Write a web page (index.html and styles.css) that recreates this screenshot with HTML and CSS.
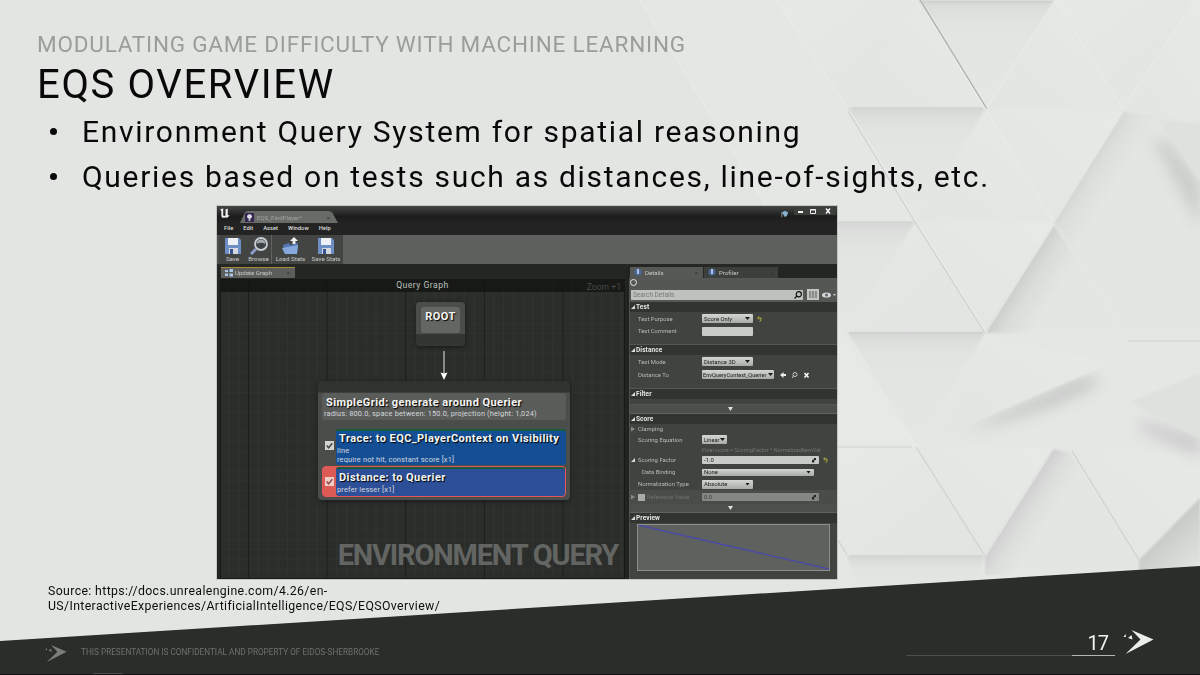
FILE: index.html
```
<!DOCTYPE html>
<html lang="en">
<head>
    <meta charset="UTF-8">
    <meta name="viewport" content="width=device-width, initial-scale=1.0">
    <title>EQS Overview</title>

    <link rel="stylesheet" href="styles.css">
</head>

<body>
    <div class="slide">
        <svg class="backdrop" viewBox="0 0 1200 675">
            <defs>
                <linearGradient id="down" x1="0" y1="0" x2="0" y2="1">
                    <stop offset="0" stop-color="#d4d6d4"/>
                    <stop offset=".08" stop-color="#dddfdd"/>
                    <stop offset=".22" stop-color="#e2e4e2"/>
                    <stop offset="1" stop-color="#e5e7e5"/>
                </linearGradient>
                <linearGradient id="soft" x1="0" y1="0" x2="1" y2="1">
                    <stop offset="0" stop-color="#e7e9e7"/>
                    <stop offset="1" stop-color="#e2e4e2"/>
                </linearGradient>
                <linearGradient id="light" x1="0" y1="1" x2="1" y2="0">
                    <stop offset="0" stop-color="#e3e5e3"/>
                    <stop offset="1" stop-color="#e7e9e7"/>
                </linearGradient>
                <linearGradient id="side" gradientUnits="userSpaceOnUse" x1="1086" y1="165" x2="1118" y2="185">
                    <stop offset="0" stop-color="#d1d3d1"/>
                    <stop offset=".35" stop-color="#dddfdd"/>
                    <stop offset="1" stop-color="#e4e6e4"/>
                </linearGradient>
                <linearGradient id="side2" gradientUnits="userSpaceOnUse" x1="1019" y1="277" x2="1054" y2="299">
                    <stop offset="0" stop-color="#cbcdcb"/>
                    <stop offset=".4" stop-color="#dbdddb"/>
                    <stop offset="1" stop-color="#e4e6e4"/>
                </linearGradient>
                <linearGradient id="side3" gradientUnits="userSpaceOnUse" x1="1019" y1="502" x2="1050" y2="522">
                    <stop offset="0" stop-color="#cecfce"/>
                    <stop offset=".45" stop-color="#dddfdd"/>
                    <stop offset="1" stop-color="#e4e6e4"/>
                </linearGradient>
                <linearGradient id="corner" gradientUnits="userSpaceOnUse" x1="1168" y1="526" x2="1200" y2="560">
                    <stop offset="0" stop-color="#c7c9c7"/>
                    <stop offset="1" stop-color="#e0e2e0"/>
                </linearGradient>
                <filter id="blur" x="-30%" y="-30%" width="160%" height="160%"><feGaussianBlur stdDeviation="7"/></filter>
                <filter id="blur1"><feGaussianBlur stdDeviation=".9"/></filter>
            </defs>
            <rect width="1200" height="675" fill="#e3e5e3"/>
            <rect x="838" width="362" height="600" fill="#e5e7e5"/>
            <g filter="url(#blur1)">
                <path fill="#e5e7e5" d="M640 0H776L848 109L915 222H776L707 109Z"/>
                <path fill="url(#soft)" d="M776 0H918L848 109Z"/>
                <path fill="url(#light)" d="M918 0L986 109H848Z"/>
                <path fill="url(#down)" d="M918 0H1055L986 109Z"/>
                <path fill="url(#light)" d="M1055 0L1123 109H986Z"/>
                <path fill="url(#soft)" d="M1055 0H1195L1123 109Z"/>
                <path fill="url(#light)" d="M1195 0H1200V122L1123 111Z"/>
                <path fill="url(#down)" d="M848 108H986L915 222Z"/>
                <path fill="url(#light)" d="M986 109L1054 222H915Z"/>
                <path fill="url(#light)" d="M986 109L1123 112L1054 222Z"/>
                <path fill="url(#side)" d="M1123 112L1200 120V330H1125L1054 222Z"/>
                <path fill="url(#down)" d="M776 222H915L847 333Z"/>
                <path fill="url(#soft)" d="M915 222L985 333H847Z"/>
                <path fill="url(#light)" d="M915 222H1054L985 333Z"/>
                <path fill="url(#side2)" d="M1054 225L1125 333H985Z"/>
                <path fill="url(#down)" d="M847 332H985L916 447Z"/>
                <path fill="#e7e9e7" d="M838 325L916 447H838Z"/>
                <path fill="url(#soft)" d="M838 447H916L985 556H847Z"/>
                <path fill="url(#light)" d="M916 447H1053L985 556Z"/>
                <path fill="url(#side3)" d="M1053 449L1070 453L1139 560V575H985V556Z"/>
                <path fill="url(#light)" d="M1072 451H1200V500L1139 560Z"/>
                <path fill="url(#corner)" d="M1139 560L1200 498V570H1139Z"/>
                <path fill="url(#down)" d="M847 556H985L960 620H870Z"/>
            </g>
            <!-- cast shadows under the raised tiles -->
            <g filter="url(#blur)">
                <path fill="#c3c5c3" opacity=".85" d="M965 430L1075 378Q1105 374 1096 386Q1040 418 965 430Z"/>
                <path fill="#c5c7c5" opacity=".8" d="M1140 420L1200 436V458Q1170 445 1140 430Z"/>
                <path fill="#c3c5c3" opacity=".8" d="M1152 138L1168 142L1200 182V228Z"/>
            </g>
            <g filter="url(#blur1)">
                <path fill="url(#light)" d="M985 336L940 437L1112 363L1058 352Z"/>
                <path fill="#dfe1df" d="M1158 120L1200 123V182Z"/>
                <path fill="#dfe1df" d="M1130 402L1200 373V439Z"/>
            </g>
            <path class="crease strong" d="M920 0L987 109"/>
            <path class="crease" d="M848 111L915 222L985 333M916 447L985 556M1072 451L1139 560M838 540L847 555"/>
            <path class="shine" d="M918 0L985 109M850 111L917 222L987 333M640 0L776 222M776 0L848 109M986 109L1054 222M847 333L916 447M1123 109L1195 0M986 109L1055 0M1055 0L1123 109M1054 222L1123 111M985 333L1054 224M985 556L1053 449"/>
            <path class="crease" d="M918 2H1052M852 108H982M838 222H912M849 333H983M838 447H912M850 556H982M1128 341H1200"/>
            <path fill="#2b2d2b" d="M0 641L1200 566V675H0Z"/>
            <path fill="#111211" d="M0 674H1200V675H0Z"/>
            <path fill="#4c4e4c" d="M93 673H122V674H93Z"/>
        </svg>

        <div class="heading">
            <p class="kicker">MODULATING GAME DIFFICULTY WITH MACHINE LEARNING</p>
            <h1>EQS OVERVIEW</h1>
        </div>

        <ul class="bullets">
            <li>Environment Query System for spatial reasoning</li>
            <li>Queries based on tests such as distances, line-of-sights, etc.</li>
        </ul>

        <div class="editor">
            <div class="titlebar">
                <svg class="logo" viewBox="0 0 12 12"><path d="M0 2Q2 .5 3.5 .5V8Q4.500 9.500 6 8V2.500L5.500 2L8.500 .5V8L10.500 8Q9 10.500 7 11L6.200 10Q4 11.500 2 10L1.500 9V3Z"/></svg>
                <div class="file-tab">
                    <svg viewBox="0 0 10 10"><rect width="10" height="10" fill="#352651"/><circle cx="5" cy="4" r="2.700" fill="#dedee8"/><rect x="4" y="6" width="2" height="3" fill="#bbb"/></svg>
                    <span>EQS_FindPlayer*</span>
                    <i>×</i>
                </div>
                <svg class="hat" viewBox="0 0 10 8"><path fill="#86afd0" d="M1 2L5 0L9 2L7.500 6L5 8L3 5Z"/><path stroke="#aaa" d="M1 2V8"/></svg>
                <svg class="winbtns" viewBox="0 0 42 8"><path fill="#3c3e3c" d="M0 0H42V8H0Z"/><path fill="#eee" d="M4 4H9V6H4Z"/><path fill="none" stroke="#eee" d="M16.500 2.500H21.500V6.500H16.500ZM16 3H22"/><path stroke="#fff" stroke-width="1.300" d="M32 1.500L36 6.500M36 1.500L32 6.500"/></svg>
            </div>
            <div class="menubar">
                <span>File</span><span>Edit</span><span>Asset</span><span>Window</span><span>Help</span>
            </div>
            <div class="toolbar">
                <div class="tools">
                    <div class="tool t-save">
                        <svg viewBox="0 0 18 18"><path fill="#6d8fc6" d="M1 1H15L17 3V17H1Z"/><path fill="#edf0f4" d="M4 1H14V8H4Z"/><path fill="#d5d9df" d="M5 11H14V17H5Z"/><path fill="#36528a" d="M6 12H9V17H6Z"/></svg>
                        <span>Save</span>
                    </div>
                    <div class="tool t-browse">
                        <svg viewBox="0 0 18 18"><path stroke="#8c9ccc" stroke-width="3" d="M1 17L6 12"/><circle cx="11" cy="7" r="6" fill="#3d4246" stroke="#c9cdd4" stroke-width="1.800"/><path fill="#a4aaae" d="M6.500 7Q7 2.500 11 2.500Q15 2.500 15.500 7Q11 4.500 6.500 7Z"/></svg>
                        <span>Browse</span>
                    </div>
                    <div class="tool t-load">
                        <svg viewBox="0 0 18 18"><path fill="#5377b5" d="M1 8L7 6L8 8L16 6L15 17H3Z"/><path fill="#86a9dc" d="M0 11L16 8L15 17H3Z"/><path fill="#eceef0" d="M12 0L16 4H13.500V7H10.500V4H8Z"/></svg>
                        <span>Load Stats</span>
                    </div>
                    <div class="tool t-stats">
                        <svg viewBox="0 0 18 18"><path fill="#6d8fc6" d="M1 1H15L17 3V17H1Z"/><path fill="#edf0f4" d="M4 1H14V8H4Z"/><path fill="#d5d9df" d="M5 11H14V17H5Z"/><path fill="#36528a" d="M6 12H9V17H6Z"/></svg>
                        <span>Save Stats</span>
                    </div>
                </div>
            </div>

            <div class="workspace">
                <div class="left">
                    <div class="tabs">
                        <div class="panel-tab graph-tab">
                            <svg viewBox="0 0 8 8"><path fill="#a8c5e5" d="M0 1H3V3H0ZM4.500 0H8V3H4.500ZM4.500 4.500H8V7.500H4.500ZM0 4.500H3V7H0Z"/></svg>
                            <span>Update Graph</span><i>×</i>
                        </div>
                    </div>
                    <div class="graph">
                        <div class="graph-title">Query Graph</div>
                        <span class="zoom">Zoom +1</span>
                        <div class="node root"><b>ROOT</b></div>
                        <svg class="arrow" viewBox="0 0 8 30"><path stroke="#e4e6e4" d="M4 1V26"/><path fill="#fff" d="M.5 22.500L4 23.500L7.500 22.500L4 30Z"/></svg>
                        <div class="node grid-node">
                            <div class="node-head">
                                <b>SimpleGrid: generate around Querier</b>
                                <span>radius: 800.0, space between: 150.0, projection (height: 1,024)</span>
                            </div>
                            <div class="test trace">
                                <div class="check"><svg viewBox="0 0 8 8"><path d="M1.500 4L3.200 6L6.500 2"/></svg></div>
                                <div class="test-body">
                                    <b>Trace: to EQC_PlayerContext on Visibility</b>
                                    <span>line</span>
                                    <span>require not hit, constant score [x1]</span>
                                </div>
                            </div>
                            <div class="test distance">
                                <div class="check"><svg viewBox="0 0 8 8"><path d="M1.500 4L3.200 6L6.500 2"/></svg></div>
                                <div class="test-body">
                                    <b>Distance: to Querier</b>
                                    <span>prefer lesser [x1]</span>
                                </div>
                            </div>
                        </div>
                        <div class="watermark">ENVIRONMENT QUERY</div>
                    </div>
                </div>

                <div class="right">
                    <div class="tabs">
                        <div class="panel-tab details-tab">
                            <svg viewBox="0 0 8 8"><circle cx="4" cy="4" r="3.500" fill="#48689c"/><path stroke="#dde" stroke-width="1.500" d="M4 1V6"/></svg>
                            <span>Details</span><i>×</i>
                        </div>
                        <div class="panel-tab profiler-tab">
                            <svg viewBox="0 0 8 8"><circle cx="4" cy="4" r="3.500" fill="#48689c"/><path stroke="#dde" stroke-width="1.500" d="M4 1V6"/></svg>
                            <span>Profiler</span><i>×</i>
                        </div>
                    </div>
                    <div class="details">
                        <div class="details-head">
                            <div class="ring"></div>
                            <div class="search-row">
                                <div class="search">
                                    <span>Search Details</span>
                                    <svg viewBox="0 0 8 8"><circle cx="4.800" cy="3.200" r="2.600"/><path d="M3 5L.5 7.500"/></svg>
                                </div>
                                <div class="matrix"></div>
                                <svg class="eye" viewBox="0 0 14 6"><ellipse cx="4.500" cy="3" rx="4.500" ry="2.600" fill="#d5d7d5"/><circle cx="4.500" cy="3" r="1.500" fill="#667"/><path fill="#ccc" d="M11 2H14L12.500 4Z"/></svg>
                            </div>
                        </div>

                        <div class="section">Test</div>
                        <div class="row h13"><label>Test Purpose</label><div class="select w52">Score Only</div><svg class="undo" viewBox="0 0 5 6"><path d="M2 .5L.7 2L2 3.500M1 2H4V4.500L2.500 5.500"/></svg></div>
                        <div class="row h12"><label>Test Comment</label><div class="input w52"></div></div>
                        <div class="gap g8"></div>

                        <div class="section">Distance</div>
                        <div class="row h13"><label>Test Mode</label><div class="select w52">Distance 3D</div></div>
                        <div class="row h13"><label>Distance To</label><div class="select w73">EnvQueryContext_Querier</div>
                            <svg class="row-icons" viewBox="0 0 30 8"><path fill="#eee" d="M0 4L3.500 1V3H6V5H3.500V7Z"/><circle cx="15" cy="3.500" r="2" fill="none" stroke="#ccc"/><path stroke="#ccc" d="M13.500 5L12 7"/><path stroke="#fff" stroke-width="1.500" d="M24.500 2L28.500 6.500M28.500 2L24.500 6.500"/></svg>
                        </div>
                        <div class="gap g8"></div>

                        <div class="section">Filter</div>
                        <div class="gap g6"></div>
                        <div class="expander"></div>

                        <div class="section">Score</div>
                        <div class="row h10 closed"><label>Clamping</label></div>
                        <div class="row h11"><label>Scoring Equation</label><div class="select w25">Linear</div></div>
                        <div class="row h9"><label></label><span class="hint">Final score = ScoringFactor * NormalizedItemVal</span></div>
                        <div class="row h12 open"><label>Scoring Factor</label><div class="input w117">-1.0<u></u></div><svg class="undo" viewBox="0 0 5 6"><path d="M2 .5L.7 2L2 3.500M1 2H4V4.500L2.500 5.500"/></svg></div>
                        <div class="row h12 indent"><label>Data Binding</label><div class="select w112">None</div></div>
                        <div class="row h12"><label>Normalization Type</label><div class="select w52">Absolute</div></div>
                        <div class="row h14 closed disabled"><label><s></s>Reference Value</label><div class="input w117">0.0<u></u></div></div>
                        <div class="expander"></div>

                        <div class="section">Preview</div>
                        <div class="preview">
                            <svg viewBox="0 0 193 46" preserveAspectRatio="none"><path d="M0 0L193 45"/></svg>
                        </div>
                    </div>
                </div>
            </div>
        </div>

        <p class="source">Source: https://docs.unrealengine.com/4.26/en-<br>US/InteractiveExperiences/ArtificialIntelligence/EQS/EQSOverview/</p>

        <div class="footer">
            <svg class="mark small" viewBox="0 0 30 24"><path d="M8 0L30 9.500L2 24L17 9.500ZM4.500 8L8 5L9 9.500ZM0 7L2 4L2.500 7Z"/></svg>
            <span class="legal">THIS PRESENTATION IS CONFIDENTIAL AND PROPERTY OF EIDOS-SHERBROOKE</span>
            <div class="rule"></div>
            <div class="page">17</div>
            <svg class="mark" viewBox="0 0 30 24"><path d="M8 0L30 9.500L2 24L17 9.500ZM4.500 8L8 5L9 9.500ZM0 7L2 4L2.500 7Z"/></svg>
        </div>
    </div>
</body>
</html>
```
FILE: styles.css
```
*{
    margin: 0;
    padding: 0;
    box-sizing: border-box;
}
body{
    width: 1200px;
    height: 675px;
    overflow: hidden;
    font-family: Roboto, "Liberation Sans", sans-serif;
}
svg{
    display: block;
    flex: none;
}
i, u, s{
    font-style: normal;
    text-decoration: none;
}
.slide{
    position: relative;
    width: 1200px;
    height: 675px;
    display: flex;
    flex-direction: column;
    isolation: isolate;
    white-space: nowrap;
}
.backdrop{
    position: absolute;
    inset: 0;
    width: 1200px;
    height: 675px;
    z-index: -1;
}
.crease{
    fill: none;
    stroke: #c6c8c6;
    stroke-width: 1.2;
    opacity: 0.7;
}
.strong{
    stroke: #a9aba9;
    opacity: 1;
}
.shine{
    fill: none;
    stroke: #eef0ee;
    stroke-width: 1.5;
    opacity: 0.4;
}

/* slide text */
.heading{
    height: 109px;
    padding: 31px 0 0 37px;
}
.kicker{
    font-size: 22.5px;
    line-height: 26px;
    font-weight: 400;
    letter-spacing: 0.79px;
    color: #9a9d9a;
}
.heading h1{
    padding-top: 3px;
    font-size: 40px;
    line-height: 50px;
    font-weight: 400;
    letter-spacing: 1.65px;
    color: #080908;
}
.bullets{
    height: 97px;
    list-style: none;
    font-size: 30px;
    line-height: 45px;
    letter-spacing: 1.7px;
    color: #080908;
}
.bullets li{
    display: flex;
    align-items: center;
    padding-left: 50px;
}
.bullets li::before{
    content: "";
    width: 7px;
    height: 7px;
    margin-right: 25px;
    border-radius: 50%;
    background-color: #080908;
}

/* editor window */
.editor{
    width: 620px;
    height: 373px;
    margin-left: 217px;
    outline: 1px solid #c4c6c4;
    background-color: #232523;
    color: #c9cbc9;
    font-size: 6.5px;
    display: flex;
    flex-direction: column;
    overflow: hidden;
}
.titlebar{
    height: 17px;
    display: flex;
    background: linear-gradient(#454745, #1b1c1b 60%, #222322);
}
.logo{
    width: 11px;
    height: 11px;
    margin: 2px 9px 0 3px;
    fill: #eeeeee;
}
.file-tab{
    width: 98px;
    height: 12px;
    margin-top: 5px;
    padding: 0 8px 0 5px;
    display: flex;
    align-items: center;
    background-color: #696b69;
    clip-path: polygon(5% 10%, 8% 0, 91% 0, 94% 10%, 100% 100%, 0 100%);
    color: #a2a4a2;
    font-size: 6.1px;
}
.file-tab svg{
    width: 9px;
    height: 9px;
    margin-right: 3px;
}
.file-tab i, .panel-tab i{
    margin-left: auto;
    color: #333533;
}
.hat{
    width: 8px;
    height: 8px;
    margin: 4px 0 0 auto;
}
.winbtns{
    width: 42px;
    height: 8px;
    margin: 1px 1px 0 5px;
}
.menubar{
    height: 12px;
    display: flex;
    gap: 10px;
    padding-left: 7px;
    line-height: 11px;
    font-size: 5.8px;
    font-weight: 500;
    color: #dcdedc;
    background-color: #222322;
}
.toolbar{
    height: 29px;
    background-color: #5e605e;
}
.tools{
    width: 126px;
    height: 29px;
    display: flex;
    background-color: #434543;
    border-left: 2px solid #4e504e;
}
.tool{
    display: flex;
    flex-direction: column;
    align-items: center;
    padding-top: 2px;
    font-size: 6.2px;
    line-height: 8px;
}
.tool svg{
    width: 18px;
    height: 18px;
}
.t-save{
    width: 27px;
}
.t-browse{
    width: 26px;
    border-right: 1px solid #616361;
}
.t-load{
    width: 37px;
}
.t-stats{
    width: 34px;
}
.workspace{
    flex: 1;
    display: flex;
    border-top: 3px solid #252725;
}
.left{
    width: 410px;
    display: flex;
    flex-direction: column;
}
.tabs{
    height: 11px;
    display: flex;
    gap: 1px;
    background-color: #242624;
}
.panel-tab{
    display: flex;
    align-items: center;
    gap: 3px;
    padding: 0 5px 1px 4px;
    height: 11px;
    font-size: 6.1px;
}
.panel-tab svg{
    width: 8px;
    height: 8px;
}
.graph-tab{
    width: 74px;
    margin-left: 4px;
    gap: 2px;
    background-color: #5c5e5c;
    border-top: 1px solid #a58b3c;
}
.graph{
    position: relative;
    flex: 1;
    margin: 1px 2px 0 3px;
    border: 1px solid #171817;
    background-color: #2b2d2b;
    background-image:
        linear-gradient(90deg, #1b1d1b 1px, transparent 1px),
        linear-gradient(90deg, #313331 1px, transparent 1px),
        linear-gradient(#2f312f 1px, transparent 1px);
    background-size: 78.6px 100%, 9.825px 100%, 100% 9.825px;
    background-position: 27px 0, 27px 0, 0 4px;
}
.graph-title{
    height: 12px;
    background-color: rgba(18,19,18,0.75);
    text-align: center;
    font-size: 8.6px;
    line-height: 11px;
    letter-spacing: 0.5px;
    color: #bfc1bf;
}
.zoom{
    position: absolute;
    right: 3px;
    top: 2px;
    font-size: 8.6px;
    color: #474947;
}
.node{
    position: absolute;
    border-radius: 4px;
    background-color: #454745;
    box-shadow: 0 1px 4px rgba(0,0,0,0.5);
}
.node b{
    color: #f4f6f4;
    text-shadow: 1px 1px 1px #000000;
    font-weight: 700;
    letter-spacing: 0.43px;
}
.root{
    left: 195px;
    top: 22px;
    width: 49px;
    height: 44px;
    padding: 5px;
    background: linear-gradient(#4b4d4b 72%, #343634 73%);
}
.root b{
    display: block;
    height: 26px;
    border-radius: 3px;
    background-color: #646664;
    font-size: 11px;
    line-height: 19px;
    text-align: center;
}
.arrow{
    position: absolute;
    left: 219px;
    top: 70px;
    width: 8px;
    height: 30px;
}
.grid-node{
    left: 97px;
    top: 101px;
    width: 252px;
    height: 119px;
    padding: 12px 4px 0 4px;
    background: linear-gradient(#303230 11px, #4b4d4b 12px);
}
.node-head{
    height: 27px;
    padding: 3px 0 0 2px;
    border-radius: 3px;
    background-color: #5a5c5a;
}
.node-head b{
    display: block;
    padding-left: 2px;
    font-size: 11px;
    line-height: 13px;
}
.grid-node span{
    display: block;
    font-size: 7.4px;
    line-height: 9px;
    letter-spacing: 0.16px;
    color: #d5d8dc;
}
.test{
    display: flex;
    align-items: center;
    border-radius: 4px;
}
.trace{
    margin-top: 9px;
    height: 36px;
}
.distance{
    margin-top: 1px;
    height: 31px;
    border: 1px solid #e4585c;
    background-color: #dc5b55;
}
.check{
    width: 14px;
    display: flex;
    justify-content: center;
    flex: none;
}
.trace .check{
    padding-bottom: 4px;
}
.distance .check{
    width: 13px;
    padding-bottom: 1px;
}
.check svg{
    width: 9px;
    height: 9px;
    background-color: #d3d5d3;
    fill: none;
    stroke: #444644;
    stroke-width: 1.3;
}
.distance .check svg{
    background-color: #f1cdca;
    stroke: #8a4a48;
}
.test-body{
    flex: 1;
    height: 100%;
    border-top: 2px solid #145c3c;
    border-radius: 3px;
    background-color: #144f96;
    padding-left: 1px;
}
.test-body b{
    display: block;
    padding-left: 2px;
    font-size: 11px;
    line-height: 15px;
}
.distance .test-body{
    background-color: #2d4f98;
    padding-top: 1px;
}
.watermark{
    position: absolute;
    right: 6px;
    bottom: 5px;
    font-size: 29px;
    line-height: 36px;
    font-weight: 700;
    letter-spacing: -1.2px;
    color: #636563;
}

/* details panel */
.right{
    width: 210px;
    padding-left: 2px;
    display: flex;
    flex-direction: column;
    background-color: #202220;
}
.right .tabs{
    padding-left: 1px;
}
.details-tab{
    width: 73px;
    background-color: #565856;
}
.profiler-tab{
    width: 74px;
    background-color: #3d3f3d;
}
.details{
    flex: 1;
    display: flex;
    flex-direction: column;
    background-color: #414341;
    border-left: 1px solid #525452;
}
.details-head{
    height: 24px;
    background-color: #555755;
    padding: 1px 0 0 0;
}
.ring{
    width: 7px;
    height: 7px;
    border: 1.5px solid #e5e7e5;
    border-radius: 50%;
}
.search-row{
    display: flex;
    align-items: center;
    margin-top: 3px;
    padding-left: 1px;
}
.search{
    width: 172px;
    height: 10px;
    display: flex;
    align-items: center;
    justify-content: space-between;
    padding: 0 1px 0 2px;
    background-color: #bfc1bf;
    color: #777977;
}
.search svg{
    width: 8px;
    height: 8px;
    fill: none;
    stroke: #111211;
    stroke-width: 1.2;
}
.matrix{
    width: 12px;
    height: 11px;
    margin: 0 3px 0 4px;
    border: 2px solid #c4c6c4;
    background: repeating-linear-gradient(90deg, #8c8e8c 0 2px, #b4b6b4 2px 3px);
}
.eye{
    width: 14px;
    height: 6px;
}
.section{
    height: 10px;
    flex: none;
    display: flex;
    align-items: center;
    gap: 1px;
    padding-left: 1px;
    background-color: #323432;
    color: #e5e7e5;
    font-size: 6.5px;
    font-weight: 700;
    letter-spacing: 0.1px;
}
.section::before, .open::before{
    content: "";
    width: 4px;
    height: 4px;
    background-color: #dcdedc;
    clip-path: polygon(100% 0, 100% 100%, 0 100%);
}
.row{
    flex: none;
    display: flex;
    align-items: center;
    color: #b9bbb9;
    font-size: 5.9px;
}
.row label{
    width: 72px;
    padding-left: 8px;
    display: flex;
    align-items: center;
    flex: none;
}
.open::before{
    margin: 0 -5px 0 1px;
}
.closed::before{
    content: "";
    width: 4px;
    height: 5px;
    margin: 0 -5px 0 1px;
    background-color: #888a88;
    clip-path: polygon(0 0, 100% 50%, 0 100%);
}
.indent label{
    padding-left: 12px;
}
.h9{ height: 9px; }
.h10{ height: 10px; }
.h11{ height: 11px; }
.h12{ height: 12px; }
.h13{ height: 13px; }
.h14{ height: 14px; }
.gap{
    flex: none;
    border-bottom: 1px solid #555755;
}
.g6{ height: 6px; }
.g8{ height: 8px; }
.select, .input{
    height: 9px;
    display: flex;
    align-items: center;
    justify-content: space-between;
    padding: 0 3px 0 2px;
    background-color: #c9cbc9;
    color: #191a19;
    border-radius: 1px;
}
.select{
    background: linear-gradient(#d4d6d4, #a9aba9);
}
.select::after{
    content: "";
    width: 5px;
    height: 3px;
    flex: none;
    background-color: #191a19;
    clip-path: polygon(0 0, 100% 0, 50% 100%);
}
.w25{ width: 25px; padding-right: 2px; font-size: 5.6px; }
.w52{ width: 51px; }
.w73{ width: 72px; padding: 0 1px; font-size: 5.6px; }
.w112{ width: 112px; height: 7px; }
.w117{ width: 117px; height: 8px; }
.input u{
    width: 4px;
    height: 5px;
    background: #222322;
    clip-path: polygon(40% 0, 100% 0, 100% 50%, 50% 60%, 60% 100%, 0 100%, 0 50%, 50% 40%);
}
.undo{
    width: 5px;
    height: 6px;
    margin-left: 4px;
    fill: none;
    stroke: #b5b13c;
}
.row-icons{
    width: 30px;
    height: 8px;
    margin-left: 6px;
}
.hint{
    font-size: 5.5px;
    color: #747674;
}
.disabled{
    color: #707270;
    background-color: #4a4c4a;
}
.disabled s{
    width: 7px;
    height: 7px;
    margin: 0 2px 0 0;
    background-color: #aaacaa;
}
.disabled .input{
    background-color: #858785;
    color: #424442;
}
.expander{
    height: 9px;
    flex: none;
    background-color: #4d4f4d;
    border-bottom: 1px solid #606260;
}
.expander::before{
    content: "";
    display: block;
    width: 5px;
    height: 4px;
    margin: 2px 0 0 98px;
    background-color: #dfe1df;
    clip-path: polygon(0 0, 100% 0, 50% 100%);
}
.preview{
    width: 193px;
    height: 47px;
    margin: 1px 0 0 7px;
    border: 1px solid #8c8e8c;
    background-color: #5f615f;
}
.preview svg{
    width: 191px;
    height: 45px;
    stroke: #4a4aa8;
    stroke-width: 1.4;
}

/* bottom of the slide */
.source{
    height: 44px;
    padding: 5px 0 0 48px;
    font-size: 12.3px;
    line-height: 15px;
    letter-spacing: 0.37px;
    color: #0c0d0c;
}
.footer{
    height: 52px;
    display: flex;
    align-items: flex-start;
    padding: 7px 0 0 45px;
}
.mark{
    width: 31px;
    height: 24px;
    margin-left: 8px;
    fill: #eceeec;
}
.mark.small{
    width: 22px;
    height: 17px;
    margin: 15px 14px 0 0;
    fill: #7c7e7c;
}
.legal{
    width: 825px;
    padding-top: 16px;
    font-size: 8.2px;
    line-height: 12px;
    letter-spacing: 0.02px;
    color: #6e706e;
}
.rule{
    width: 166px;
    height: 1px;
    margin-top: 25px;
    background-color: #4c4e4c;
}
.page{
    width: 43px;
    height: 26px;
    padding-right: 7px;
    border-bottom: 1px solid #b5b7b5;
    font-size: 20px;
    line-height: 26px;
    letter-spacing: -1px;
    text-align: right;
    color: #f0f2f0;
}
```
